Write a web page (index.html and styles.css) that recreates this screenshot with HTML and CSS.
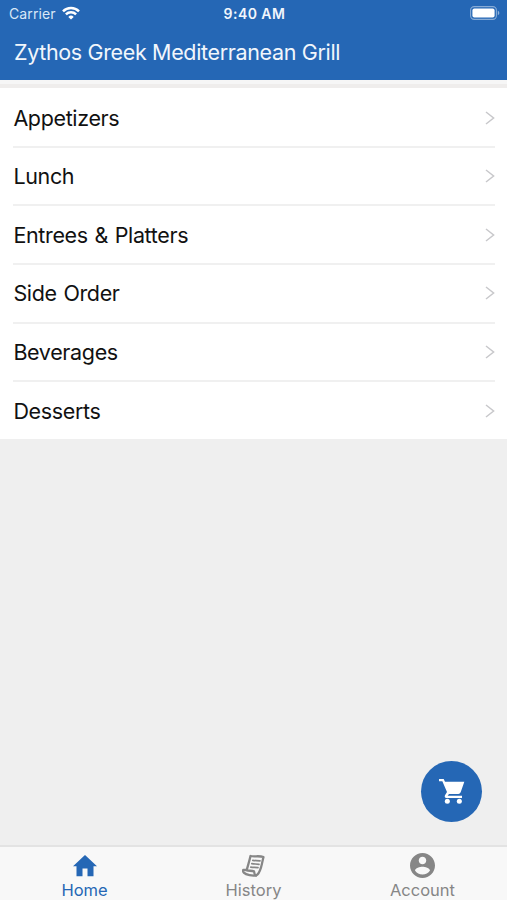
FILE: index.html
```html
<!DOCTYPE html>
<html lang="en">
<head>
<meta charset="utf-8">
<title>Zythos Greek Mediterranean Grill</title>
<link rel="stylesheet" href="styles.css">
</head>
<body>
<div class="app">
  <header class="header">
    <div class="status">
      <div class="carrier"><span>Carrier</span>
        <svg class="wifi" viewBox="0 0 18 14" width="18" height="14"><path d="M9 13.6 6.3 10.9a3.9 3.9 0 0 1 5.4 0z" fill="currentColor"/><path d="M3.9 8.4a7.3 7.3 0 0 1 10.2 0M1 5.4a11.4 11.4 0 0 1 16 0" fill="none" stroke="currentColor" stroke-width="2.5"/></svg>
      </div>
      <div class="time">9:40 AM</div>
      <svg class="battery" viewBox="0 0 30 14" width="30" height="14"><rect x=".6" y=".6" width="25.8" height="12.8" rx="3.6" fill="none" stroke="#fff" stroke-opacity=".45" stroke-width="1.1"/><rect x="2.4" y="2.4" width="22.2" height="9.2" rx="2" fill="#fff"/><path d="M27.8 4.8c2 .7 2 3.7 0 4.4z" fill="#fff" fill-opacity=".5"/></svg>
    </div>
    <h1 class="title">Zythos Greek Mediterranean Grill</h1>
  </header>
  <main class="content">
    <ul class="menu">
      <li class="item"><span>Appetizers</span><svg class="chevron" viewBox="0 0 10 14"><path d="m1 1 7.6 6L1 13"/></svg></li>
      <li class="item"><span>Lunch</span><svg class="chevron" viewBox="0 0 10 14"><path d="m1 1 7.6 6L1 13"/></svg></li>
      <li class="item"><span>Entrees &amp; Platters</span><svg class="chevron" viewBox="0 0 10 14"><path d="m1 1 7.6 6L1 13"/></svg></li>
      <li class="item"><span>Side Order</span><svg class="chevron" viewBox="0 0 10 14"><path d="m1 1 7.6 6L1 13"/></svg></li>
      <li class="item"><span>Beverages</span><svg class="chevron" viewBox="0 0 10 14"><path d="m1 1 7.6 6L1 13"/></svg></li>
      <li class="item"><span>Desserts</span><svg class="chevron" viewBox="0 0 10 14"><path d="m1 1 7.6 6L1 13"/></svg></li>
    </ul>
  </main>
  <button class="cart" aria-label="Cart"><svg viewBox="0 0 183 183" width="61" height="61" fill="currentColor"><path d="M54 54h14l4 8h58l-11 32q-2 5-7 5H84l-4 5h43v7H76q-7-1-4-8l6-10-14-32h-10z"/><circle cx="79" cy="121" r="7.500"/><circle cx="115" cy="121" r="7.500"/></svg></button>
  <nav class="tabs">
    <a class="tab active"><svg viewBox="0 0 24 22" width="24" height="22" fill="currentColor"><path d="M12 0 24 11.200h-3.500V21.300h-6V13.500h-5v7.800h-6V11.200H0z"/></svg><span>Home</span></a>
    <a class="tab history"><svg viewBox="0 0 24 24" width="24" height="24" fill="none" stroke="currentColor" stroke-width="2.300" stroke-linejoin="round" stroke-linecap="round"><path d="M8.500 2c4 1 8.500-.6 13 1-1 3.500-1.100 5.500-2.300 9.700-1.200 4-2 7.500-5.100 8.700-3.500.8-9.900-.3-12.300-2.800-.8-1-.8-1.800-.6-2.600 1.600-.1 2.400 0 3.500 0C5.800 12.200 7.500 6.500 8.500 2zM4.700 16.300c2 .5 5.300.4 7.300 1 .2 2 .5 3.400 2.100 4.400"/><path d="M10.800 6.300c2.500.5 4.500.1 7.200.6M9.800 9.700c2.500.5 4.500.1 7.200.6M8.800 13.100c2.500.5 4.500.1 7.200.6" stroke-width="1.700"/></svg><span>History</span></a>
    <a class="tab account"><svg viewBox="2 2 20 20" width="25" height="25" fill="currentColor"><path d="M12 2C6.480 2 2 6.480 2 12s4.480 10 10 10 10-4.480 10-10S17.520 2 12 2zm0 3c1.660 0 3 1.340 3 3s-1.340 3-3 3-3-1.340-3-3 1.340-3 3-3zm0 14.200c-2.500 0-4.710-1.280-6-3.220.03-1.990 4-3.080 6-3.080 1.990 0 5.970 1.090 6 3.080-1.290 1.940-3.500 3.220-6 3.220z"/></svg><span>Account</span></a>
  </nav>
</div>
</body>
</html>
```
FILE: styles.css
```css
* { box-sizing: border-box; }
body { margin: 0; font-family: Inter, "Liberation Sans", sans-serif; }
.app { position: relative; display: flex; flex-direction: column; height: 900px; overflow: hidden; background: #efefef; }
.header { height: 80px; background: #2567b5; color: #f1f6fc; }
.status { display: grid; grid-template-columns: 1fr auto 1fr; align-items: center; height: 27px; padding: 0 7px 0 9px; }
.carrier { display: flex; align-items: center; gap: 6px; font-size: 14px; letter-spacing: .1px; color: #d9e7f7; }
.wifi { margin-top: -2px; color: #fff; }
.time { font-size: 14px; font-weight: 600; letter-spacing: .45px; }
.battery { justify-self: end; margin-top: -1px; }
.title { margin: 0; padding-left: 14px; font-size: 21.5px; line-height: 50px; font-weight: 400; letter-spacing: -.35px; }
.content { flex: 1; border-top: 4px solid #f6f6f6; }
.menu { height: 355px; overflow: hidden; margin: 0; padding: 1.3px 0 0; list-style: none; background: #fff; border-top: 4px solid #efedec; }
.item { display: flex; align-items: center; justify-content: space-between; height: 58.6px; margin: 0 12px 0 13px; border-bottom: 2px solid #f0f0f0; font-size: 21.5px; letter-spacing: -.35px; word-spacing: 1px; color: #111; }
.item span { padding-left: .4px; }
.item:last-child { border-bottom-color: transparent; }
.chevron { width: 10px; height: 14px; fill: none; stroke: #c8c8cb; stroke-width: 1.500; }
.cart { position: absolute; left: 421px; top: 761px; display: flex; align-items: center; justify-content: center; width: 61px; height: 61px; padding: 0; border: 0; border-radius: 50%; background: #2567b5; color: #fff; }
.tabs { display: grid; grid-template-columns: repeat(3, 1fr); height: 55px; border-top: 2px solid #e3e3e3; background: #f8f8f8; color: #868686; }
.tab { display: flex; flex-direction: column; align-items: center; justify-content: space-between; padding-top: 7px; font-size: 16.500px; line-height: 19px; }
.active { padding-top: 8px; color: #2567b5; }
.account { padding-top: 6px; }
```
